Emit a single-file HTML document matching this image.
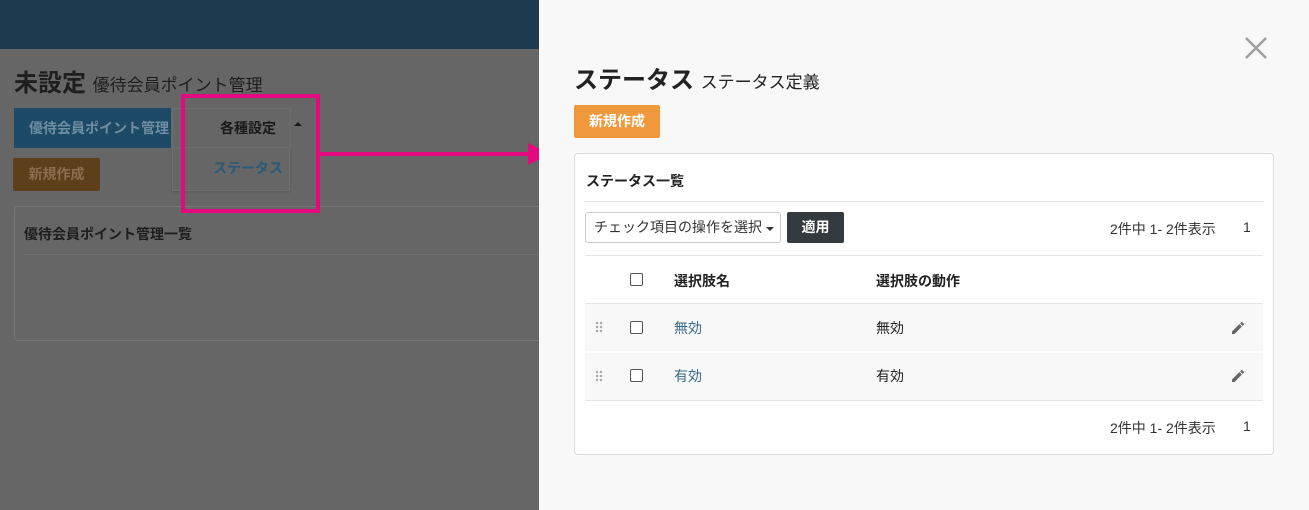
<!DOCTYPE html>
<html><head><meta charset="utf-8"><style>
*{box-sizing:border-box;margin:0;padding:0}
body{width:1309px;height:510px;overflow:hidden;position:relative;font-family:"Liberation Sans","Noto Sans CJK JP",sans-serif;background:#666;color:#222}
.a{position:absolute;white-space:nowrap}
</style></head><body>
<div class="a" style="left:0;top:0;width:539px;height:49px;background:#1b3a4e"></div>
<div class="a" style="left:14px;top:63px;font-size:24px;font-weight:bold;color:#1e1e1e">未設定 <span style="font-size:17px;font-weight:normal">優待会員ポイント管理</span></div>
<div class="a" style="left:14px;top:108px;width:157px;height:40px;background:#1d4a66;color:#6f8ea3;font-size:14px;font-weight:bold;line-height:40px;padding-left:15px">優待会員ポイント管理</div>
<div class="a" style="left:172px;top:108px;width:119px;height:40px;border:1px solid #6e6e6e;font-size:14px;font-weight:bold;line-height:38px;padding-left:47px;color:#1a1a1a">各種設定</div>
<div class="a" style="left:294px;top:122px;width:0;height:0;border-left:4px solid transparent;border-right:4px solid transparent;border-bottom:4px solid #1a1a1a"></div>
<div class="a" style="left:172px;top:148px;width:118px;height:43px;border:1px solid #6e6e6e;border-top:none;font-size:14px;font-weight:bold;line-height:40px;padding-left:40px;color:#2a5a7a;box-shadow:0 1px 2px #5a5a5a">ステータス</div>
<div class="a" style="left:13px;top:158px;width:87px;height:33px;background:#5e3f1c;border-radius:2px;color:#8a6e50;font-size:14px;font-weight:bold;line-height:33px;text-align:center">新規作成</div>
<div class="a" style="left:14px;top:206px;width:540px;height:135px;border:1px solid #777;border-radius:4px"></div>
<div class="a" style="left:24px;top:224px;font-size:14px;font-weight:bold;color:#1e1e1e">優待会員ポイント管理一覧</div>
<div class="a" style="left:23px;top:254px;width:520px;height:1px;background:#707070"></div>
<div class="a" style="left:181px;top:94px;width:139px;height:119px;border:4px solid #e4097f"></div>
<div class="a" style="left:320px;top:152px;width:212px;height:4px;background:#e4097f"></div>
<div class="a" style="left:528px;top:143px;width:0;height:0;border-top:11px solid transparent;border-bottom:11px solid transparent;border-left:22px solid #e4097f"></div>

<div class="a" style="left:539px;top:0;width:770px;height:510px;background:#f8f8f8"></div>
<svg class="a" style="left:1243px;top:35px" width="26" height="26"><path d="M3 3L23 23M23 3L3 23" stroke="#a0a0a0" stroke-width="2.5"/></svg>
<div class="a" style="left:574px;top:60px;font-size:24px;font-weight:bold;color:#222">ステータス <span style="font-size:17px;font-weight:normal">ステータス定義</span></div>
<div class="a" style="left:574px;top:105px;width:86px;height:33px;background:#f0993c;border-radius:2px;color:#fff;font-size:14px;font-weight:bold;line-height:33px;text-align:center">新規作成</div>
<div class="a" style="left:574px;top:153px;width:700px;height:302px;background:#fff;border:1px solid #ddd;border-radius:4px"></div>
<div class="a" style="left:586px;top:171px;font-size:14px;font-weight:bold">ステータス一覧</div>
<div class="a" style="left:585px;top:201px;width:678px;height:1px;background:#e5e5e5"></div>
<div class="a" style="left:585px;top:212px;width:196px;height:31px;border:1px solid #ccc;border-radius:3px;font-size:14px;line-height:29px;padding-left:8px;color:#333">チェック項目の操作を選択</div>
<div class="a" style="left:766px;top:227px;width:0;height:0;border-left:4px solid transparent;border-right:4px solid transparent;border-top:4px solid #333"></div>
<div class="a" style="left:787px;top:212px;width:57px;height:31px;background:#343a40;border-radius:2px;color:#fff;font-size:14px;font-weight:bold;line-height:31px;text-align:center">適用</div>
<div class="a" style="left:1110px;top:219px;font-size:14px;color:#333">2件中 1- 2件表示</div>
<div class="a" style="left:1243px;top:219px;font-size:14px;color:#333">1</div>
<div class="a" style="left:585px;top:255px;width:678px;height:1px;background:#e5e5e5"></div>
<div class="a" style="left:630px;top:273px;width:13px;height:13px;border:1px solid #555;border-radius:2px"></div>
<div class="a" style="left:674px;top:271px;font-size:14px;font-weight:bold">選択肢名</div>
<div class="a" style="left:876px;top:271px;font-size:14px;font-weight:bold">選択肢の動作</div>
<div class="a" style="left:585px;top:303px;width:678px;height:98px;background:#f8f8f8;border-top:1px solid #e5e5e5;border-bottom:1px solid #e5e5e5"></div>
<div class="a" style="left:585px;top:351px;width:678px;height:2px;background:#fff"></div>
<div class="a" style="left:595px;top:321px;width:8px;height:12px;background:radial-gradient(circle,#aaa 1px,transparent 1.5px) 0 0/4px 4px"></div>
<div class="a" style="left:595px;top:370px;width:8px;height:12px;background:radial-gradient(circle,#aaa 1px,transparent 1.5px) 0 0/4px 4px"></div>
<div class="a" style="left:630px;top:321px;width:13px;height:13px;border:1px solid #555;border-radius:2px;background:#fff"></div>
<div class="a" style="left:630px;top:369px;width:13px;height:13px;border:1px solid #555;border-radius:2px;background:#fff"></div>
<div class="a" style="left:674px;top:318px;font-size:14px;color:#3a6a8a">無効</div>
<div class="a" style="left:876px;top:318px;font-size:14px;color:#222">無効</div>
<div class="a" style="left:674px;top:366px;font-size:14px;color:#3a6a8a">有効</div>
<div class="a" style="left:876px;top:366px;font-size:14px;color:#222">有効</div>
<svg class="a" style="left:1230px;top:320px" width="16" height="16" viewBox="0 0 24 24"><path fill="#666" d="M3 17.25V21h3.75L17.81 9.94l-3.75-3.75L3 17.25zM20.71 7.04a1 1 0 000-1.41l-2.34-2.34a1 1 0 00-1.41 0l-1.83 1.83 3.750 3.75 1.83-1.83z"/></svg>
<svg class="a" style="left:1230px;top:368px" width="16" height="16" viewBox="0 0 24 24"><path fill="#666" d="M3 17.25V21h3.75L17.81 9.94l-3.75-3.75L3 17.25zM20.71 7.04a1 1 0 000-1.41l-2.34-2.34a1 1 0 00-1.41 0l-1.83 1.83 3.75 3.75 1.83-1.83z"/></svg>
<div class="a" style="left:1110px;top:418px;font-size:14px;color:#333">2件中 1- 2件表示</div>
<div class="a" style="left:1243px;top:418px;font-size:14px;color:#333">1</div>
</body></html>
